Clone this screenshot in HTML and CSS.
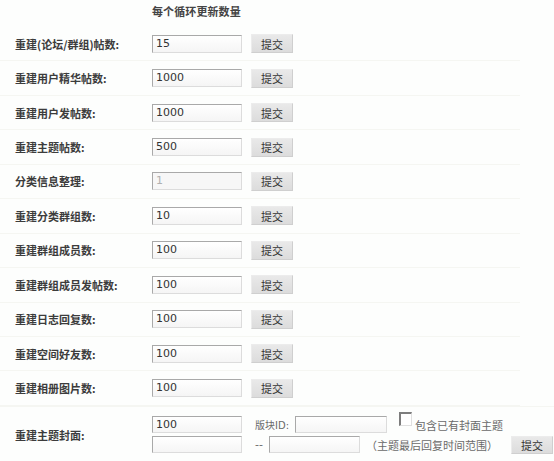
FILE: index.html
```html
<!DOCTYPE html>
<html lang="zh">
<head>
<meta charset="utf-8">
<link rel="stylesheet" href="styles.css">
</head>
<body>
<div class="panel">
  <div class="head"><span class="head-title">每个循环更新数量</span></div>

  <div class="row"><span class="label">重建(论坛/群组)帖数:</span><span class="field">15</span><span class="btn">提交</span></div>
  <div class="row"><span class="label">重建用户精华帖数:</span><span class="field">1000</span><span class="btn">提交</span></div>
  <div class="row"><span class="label">重建用户发帖数:</span><span class="field">1000</span><span class="btn">提交</span></div>
  <div class="row"><span class="label">重建主题帖数:</span><span class="field">500</span><span class="btn">提交</span></div>
  <div class="row"><span class="label">分类信息整理:</span><span class="field field-off">1</span><span class="btn">提交</span></div>
  <div class="row"><span class="label">重建分类群组数:</span><span class="field">10</span><span class="btn">提交</span></div>
  <div class="row"><span class="label">重建群组成员数:</span><span class="field">100</span><span class="btn">提交</span></div>
  <div class="row"><span class="label">重建群组成员发帖数:</span><span class="field">100</span><span class="btn">提交</span></div>
  <div class="row"><span class="label">重建日志回复数:</span><span class="field">100</span><span class="btn">提交</span></div>
  <div class="row"><span class="label">重建空间好友数:</span><span class="field">100</span><span class="btn">提交</span></div>
  <div class="row"><span class="label">重建相册图片数:</span><span class="field">100</span><span class="btn">提交</span></div>
</div>

<div class="last">
  <span class="label">重建主题封面:</span>
  <div class="lines">
    <div class="line">
      <span class="field">100</span>
      <span class="note note-fid">版块ID:</span>
      <span class="field field-fid"></span>
      <span class="check"></span>
      <span class="note">包含已有封面主题</span>
    </div>
    <div class="line">
      <span class="field"></span>
      <span class="note note-dash">--</span>
      <span class="field field-to"></span>
      <span class="note note-range">（主题最后回复时间范围）</span>
      <span class="btn">提交</span>
    </div>
  </div>
</div>
</body>
</html>
```

FILE: styles.css
```css
html, body {
  margin: 0;
  padding: 0;
  background: #fdfefd;
}
body {
  width: 554px;
  height: 461px;
  overflow: hidden;
  font-family: "Noto Sans CJK SC", "DejaVu Sans", sans-serif;
  font-size: 11px;
  color: #3a3a3a;
}
.panel {
  width: 520px;
}
.head {
  height: 27px;
  padding-left: 152px;
  display: flex;
  align-items: center;
  box-sizing: border-box;
  padding-bottom: 5px;
}
.head-title {
  font-weight: bold;
  color: #444;
  font-size: 11px;
  letter-spacing: 0.1px;
}
.row {
  height: 34.45px;
  box-sizing: border-box;
  display: flex;
  align-items: center;
  border-bottom: 1px solid #f5f6f2;
}
.label {
  width: 137px;
  padding-left: 15px;
  font-weight: bold;
  color: #3c3c3c;
  font-size: 11px;
  white-space: nowrap;
}
.field {
  width: 90px;
  height: 18px;
  box-sizing: border-box;
  border: 1px solid #dcdcdc;
  border-top-color: #a9a9a9;
  border-left-color: #a9a9a9;
  background: linear-gradient(#ffffff, #f5f5f5);
  font-family: "DejaVu Sans", "Noto Sans CJK SC", sans-serif;
  font-size: 11px;
  color: #333;
  line-height: 16px;
  padding-left: 3px;
  display: inline-block;
}
.field-off {
  color: #b0b0b0;
  background: #f7f7f7;
}
.btn {
  width: 42px;
  height: 19px;
  box-sizing: border-box;
  margin-left: 9px;
  border: 1px solid #cfcfcf;
  border-top-color: #ececec;
  border-left-color: #ececec;
  background: linear-gradient(#e9e9e9, #dcdcdc);
  display: flex;
  align-items: center;
  justify-content: center;
  color: #333;
  font-size: 11px;
}
.last {
  display: flex;
  align-items: center;
  border-top: 1px solid #f5f6f2;
  padding-top: 0;
  height: 57px;
  box-sizing: border-box;
}
.lines {
  display: flex;
  flex-direction: column;
  gap: 3px;
}
.line {
  display: flex;
  align-items: center;
  height: 17px;
}
.line .field {
  height: 17px;
}
.note {
  color: #6a6a6a;
  font-size: 11px;
  white-space: nowrap;
}
.note-fid {
  margin-left: 13px;
  width: 40px;
  font-family: "DejaVu Sans", "Noto Sans CJK SC", sans-serif;
  font-size: 10px;
}
.field-fid {
  width: 92px;
}
.check {
  width: 13px;
  height: 14px;
  box-sizing: border-box;
  margin-left: 12px;
  margin-right: 3px;
  margin-bottom: 12px;
  border: 1px solid #e0e0e0;
  border-top: 2px solid #7d7d7d;
  border-left: 2px solid #7d7d7d;
  background: #fff;
}
.note-dash {
  margin-left: 13px;
  width: 14px;
  font-family: "DejaVu Sans", sans-serif;
}
.field-to {
  width: 91px;
}
.note-range {
  margin-left: 6px;
}
.line .btn {
  margin-left: 13px;
  height: 18px;
}
```
